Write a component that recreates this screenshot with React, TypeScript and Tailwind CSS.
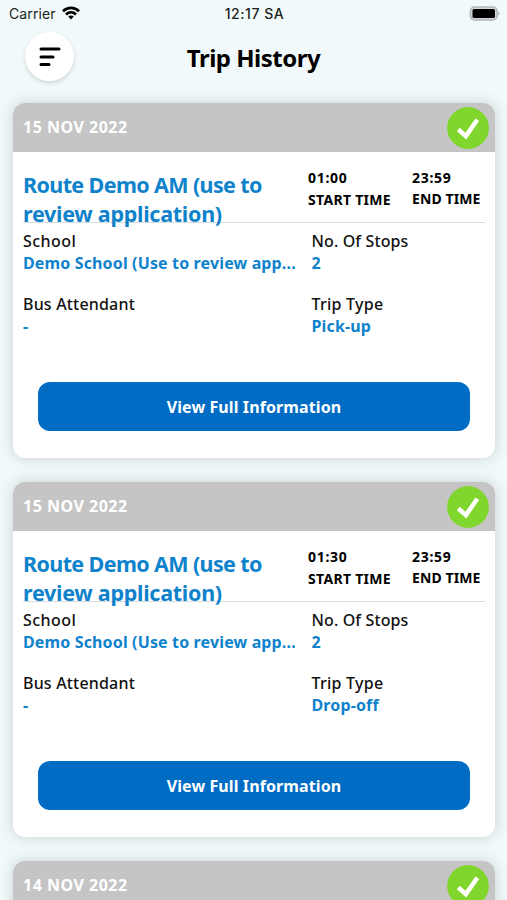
import React from "react";

type Trip = { date: string; start?: string; type?: string };

const trips: Trip[] = [
  { date: "15 NOV 2022", start: "01:00", type: "Pick-up" },
  { date: "15 NOV 2022", start: "01:30", type: "Drop-off" },
  { date: "14 NOV 2022" },
];

function StatusBar() {
  return (
    <div className="grid h-7 grid-cols-3 items-center pl-[9px] pr-[7px] font-['Inter',sans-serif] text-[14px] leading-5 text-[#1c1f20]">
      <div className="flex items-center gap-[6px]">
        <span className="tracking-[0.1px]">Carrier</span>
        <svg className="-mt-[2px]" width="18" height="14" viewBox="0 0 18 14" fill="none" stroke="#000" strokeWidth="2.7">
          <path d="M1 5.2C5.6.7 12.4.7 17 5.2" />
          <path d="M4 8.5c2.9-2.8 7.1-2.8 10 0" />
          <path d="M9 13.4 6.2 10.6c1.6-1.5 4-1.5 5.6 0Z" fill="#000" stroke="none" />
        </svg>
      </div>
      <div className="text-center font-medium tracking-[0.55px]">12:17 SA</div>
      <svg className="-mt-[2px] justify-self-end" width="31" height="15" viewBox="0 0 31 15">
        <rect x="1.4" y="1" width="26.6" height="13" rx="4.2" fill="#d3d7d7" stroke="#b4b8b8" strokeWidth="1.6" />
        <rect x="3.5" y="3" width="22.5" height="9" rx="1.6" fill="#000" />
        <path d="M29.1 5.3c1.8.8 1.8 3.6 0 4.4Z" fill="#a9adad" />
      </svg>
    </div>
  );
}

function CheckBadge() {
  return (
    <svg width="42" height="42" viewBox="0 0 42 42">
      <circle cx="21" cy="21" r="20.9" fill="#80d62c" />
      <path d="m11.3 22.5 7.6 6.6L30.3 12.8" fill="none" stroke="#fff" strokeWidth="4.5" />
    </svg>
  );
}

function Field({ label, value, labelClass }: { label: string; value: string; labelClass: string }) {
  return (
    <div className="whitespace-nowrap">
      <div className={"text-[16px] font-medium leading-[22px] text-[#111] " + labelClass}>{label}</div>
      <div className="text-[16px] font-bold leading-[23px] tracking-[0.14px] text-[#0f82cc]">{value}</div>
    </div>
  );
}

function TripDetails({ start, type }: { start: string; type: string }) {
  return (
    <>
      <div className="px-[10px]">
        <div className="flex h-[71px] border-b border-[#d8dcde] pt-[19px]">
          <h2 className="w-[285px] whitespace-nowrap text-[21.5px] font-bold leading-[28.5px] text-[#0f82cc]">
            <span className="tracking-[-0.62px]">Route Demo AM (use to</span>
            <br />
            <span className="tracking-[-0.27px]">review application)</span>
          </h2>
          <div className="-mt-[4px] w-[104px] whitespace-nowrap text-[14px] font-bold leading-[22px] text-black">
            <div className="tracking-[0.7px]">{start}</div>
            <div className="tracking-[0.3px]">START TIME</div>
          </div>
          <div className="-mt-[4px] whitespace-nowrap text-[14px] font-bold leading-[21px] text-black">
            <div className="tracking-[0.7px]">23:59</div>
            <div className="tracking-[0.1px]">END TIME</div>
          </div>
        </div>
        <div className="grid grid-cols-[288.5px_1fr] gap-y-[18px] pt-[7px]">
          <Field label="School" value="Demo School (Use to review app..." labelClass="tracking-[0.45px]" />
          <Field label="No. Of Stops" value="2" labelClass="tracking-[0.12px]" />
          <Field label="Bus Attendant" value="-" labelClass="tracking-[0.18px]" />
          <Field label="Trip Type" value={type} labelClass="tracking-[0.25px]" />
        </div>
      </div>
      <button className="mx-[25px] mt-[44px] block h-[49px] w-[432px] rounded-[12px] bg-[#006cc4] text-[16px] font-bold tracking-[0.1px] text-white">
        View Full Information
      </button>
    </>
  );
}

function TripCard({ trip }: { trip: Trip }) {
  return (
    <article className="h-[355px] shrink-0 overflow-hidden rounded-[12px] bg-white shadow-[0_0_14px_rgba(80,92,95,0.25)]">
      <header className="flex h-[49px] items-center justify-between bg-[#c5c5c5] pl-[10px] pr-[6px]">
        <span className="-mt-px text-[16px] font-bold tracking-[0.5px] text-white">{trip.date}</span>
        <CheckBadge />
      </header>
      {trip.start && trip.type && <TripDetails start={trip.start} type={trip.type} />}
    </article>
  );
}

export default function App() {
  return (
    <main className="h-[900px] w-[507px] overflow-hidden bg-[#f1f9fb] font-['Noto_Sans',sans-serif]">
      <StatusBar />
      <div className="grid h-[75.4px] grid-cols-[75px_1fr_75px] items-start">
        <button className="ml-[25px] mt-1 flex size-[49px] items-center justify-center rounded-full bg-white shadow-[0_2px_4px_rgba(0,0,0,0.15)]">
          <svg width="22" height="20" viewBox="0 0 22 20" stroke="#000" strokeWidth="3" strokeLinecap="round">
            <path d="M2 2h18M2 10h12M2 17.5h8" />
          </svg>
        </button>
        <h1 className="mt-[14px] text-center text-[24px] font-bold leading-8 tracking-[-0.5px] text-black">Trip History</h1>
      </div>
      <section className="flex flex-col gap-6 pl-[13px] pr-[12px]">
        {trips.map((trip, i) => (
          <TripCard key={i} trip={trip} />
        ))}
      </section>
    </main>
  );
}
